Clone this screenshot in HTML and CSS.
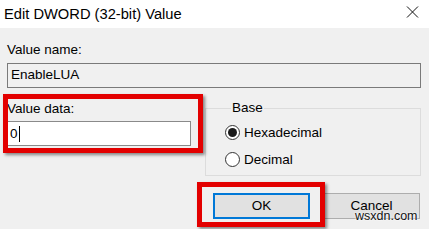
FILE: index.html
```html
<!DOCTYPE html>
<html lang="en">
<head>
    <meta charset="UTF-8">
    <meta name="viewport" content="width=device-width, initial-scale=1.0">
    <link rel="stylesheet" href="styles.css">
</head>
<body>
    <div class="window">
        <div class="titlebar">
            <span class="title">Edit DWORD (32-bit) Value</span>
            <svg class="close" width="13" height="12" viewBox="0 0 13 12">
                <line x1="1" y1="0.5" x2="12" y2="11.5" stroke="#111" stroke-width="1"/>
                <line x1="12" y1="0.5" x2="1" y2="11.5" stroke="#111" stroke-width="1"/>
            </svg>
        </div>

        <div class="dialog">
            <div class="label">Value name:</div>
            <div class="field field-readonly">EnableLUA</div>

            <div class="row">
                <div class="data-col">
                    <div class="label label-data">Value data:</div>
                    <div class="field field-data">0<span class="caret"></span></div>
                </div>

                <fieldset class="base">
                    <legend>Base</legend>
                    <div class="radio-row">
                        <span class="radio checked"></span>
                        <span>Hexadecimal</span>
                    </div>
                    <div class="radio-row">
                        <span class="radio"></span>
                        <span>Decimal</span>
                    </div>
                </fieldset>
            </div>

            <div class="buttons">
                <div class="btn btn-default">OK</div>
                <div class="btn">Cancel</div>
            </div>
        </div>

        <!-- marcações vermelhas sobre a captura -->
        <div class="mark mark-data"></div>
        <div class="mark mark-ok"></div>

        <div class="watermark">wsxdn.com</div>
    </div>
</body>
</html>
```

FILE: styles.css
```css
body {
    margin: 0;
    background: #f0f0f0;
    font-family: "Liberation Sans", Arial, sans-serif;
    color: #000;
}

.window {
    position: relative;
    width: 429px;
    height: 229px;
    overflow: hidden;
}

/* Barra de título */
.titlebar {
    height: 28px;
    background: #fff;
    display: flex;
    align-items: center;
    justify-content: space-between;
    padding: 0 10px 0 4px;
}

.title {
    font-size: 14.7px;
    line-height: 16px;
    margin-top: -1px;
}

.close {
    display: block;
    margin-top: -4px;
}

.dialog {
    padding: 14px 8px 0 7px;
}

.label {
    font-size: 13.5px;
    line-height: 16px;
}

.field {
    box-sizing: border-box;
    height: 25px;
    border: 1px solid #7a7a7a;
    font-size: 13.5px;
    line-height: 22px;
    padding-left: 3px;
}

.field-readonly {
    margin-top: 5px;
    background: #f0f0f0;
}

.row {
    display: flex;
}

.data-col {
    width: 184px;
}

.label-data {
    margin-top: 13px;
}

.field-data {
    margin-top: 4px;
    background: #fff;
    display: flex;
    align-items: center;
    padding-left: 2px;
    border-color: #8a8a8a;
}

.caret {
    display: inline-block;
    width: 1px;
    height: 16px;
    background: #000;
    margin-left: 1px;
}

/* Grupo Base */
.base {
    margin: 12px 0 0 14px;
    padding: 3px 0 0 19px;
    flex: 1;
    height: 76px;
    box-sizing: border-box;
    border: 1px solid #dcdcdc;
    min-width: 0;
}

.base legend {
    font-size: 13.5px;
    line-height: 16px;
    padding: 0 1px;
    margin-left: 6px;
}

.radio-row {
    display: flex;
    align-items: center;
    gap: 4px;
    font-size: 13.5px;
    height: 27px;
}

.radio {
    box-sizing: border-box;
    width: 15px;
    height: 15px;
    border: 1px solid #333;
    border-radius: 50%;
    background: #fff;
    position: relative;
}

.radio.checked::after {
    content: "";
    position: absolute;
    left: 2px;
    top: 2px;
    width: 9px;
    height: 9px;
    border-radius: 50%;
    background: #1a1a1a;
}

/* Botões */
.buttons {
    display: flex;
    justify-content: flex-end;
    gap: 13px;
    margin-top: 17px;
    padding-right: 1px;
}

.btn {
    box-sizing: border-box;
    width: 97px;
    height: 26px;
    background: #e1e1e1;
    border: 1px solid #adadad;
    font-size: 13.5px;
    line-height: 24px;
    text-align: center;
}

.btn-default {
    border: 2px solid #0078d7;
    line-height: 22px;
}

/* Retângulos vermelhos */
.mark {
    position: absolute;
    box-sizing: border-box;
    border: 5px solid #e30000;
    box-shadow: 2px 2px 3px rgba(0, 0, 0, 0.45);
}

.mark-data {
    left: 3px;
    top: 94px;
    width: 200px;
    height: 59px;
}

.mark-ok {
    left: 197px;
    top: 182px;
    width: 128px;
    height: 45px;
}

.watermark {
    position: absolute;
    left: 355px;
    top: 209px;
    font-size: 12.5px;
    line-height: 14px;
    color: #111;
    text-shadow: 0 0 2px #fff, 0 0 2px #fff;
}
```
